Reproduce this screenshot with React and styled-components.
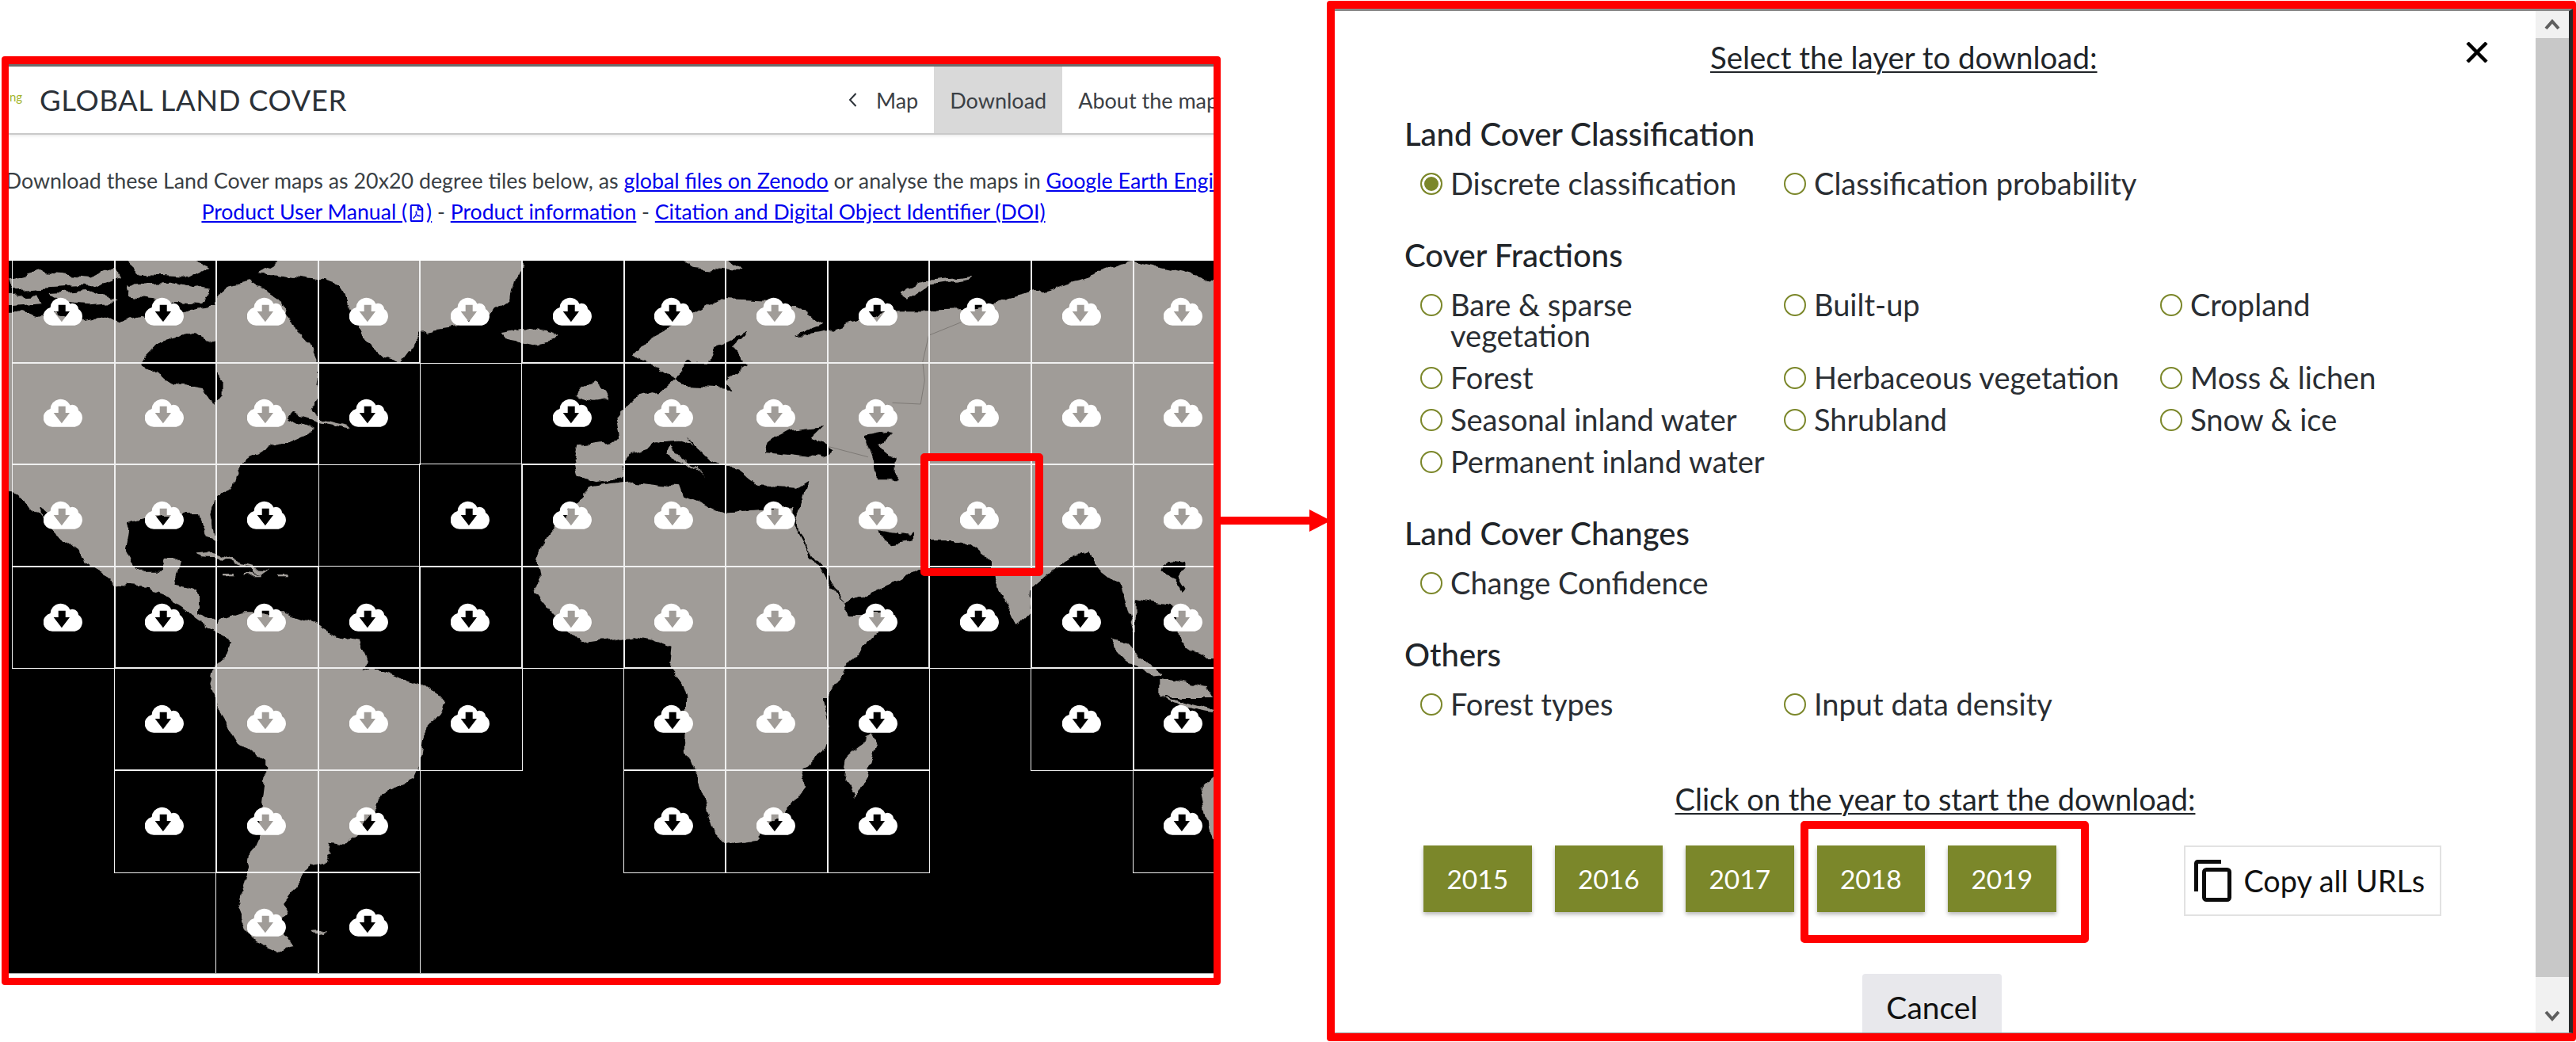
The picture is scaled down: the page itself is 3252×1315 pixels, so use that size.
import React from 'react';
import styled, { createGlobalStyle } from 'styled-components';
import { FaRegFilePdf } from 'react-icons/fa';

const GlobalStyle = createGlobalStyle`
  html, body {
    margin: 0;
    padding: 0;
    background: #fff;
  }
  * {
    box-sizing: border-box;
  }
`;

const Page = styled.div`
  position: relative;
  display: flex;
  align-items: flex-start;
  width: 3252px;
  height: 1315px;
  overflow: hidden;
  background: #fff;
  font-family: Lato, 'Open Sans', sans-serif;
  color: #212529;
`;

const ViewerFrame = styled.section`
  flex: 0 0 1539px;
  height: 1172px;
  margin: 71px 0 0 2px;
  border: 10px solid #ff0000;
  border-width: 10px 9px 9px 9px;
  border-radius: 4px;
  overflow: hidden;
  background: #fff;
`;

const ViewerInner = styled.div`
  width: 1521px;
  height: 1153px;
  border-top: 3px solid #6d6d6d;
  overflow: hidden;
`;

const Header = styled.header`
  display: flex;
  align-items: stretch;
  height: 86px;
  border-bottom: 2px solid #c9c9c9;
  box-shadow: 0 2px 3px rgba(0, 0, 0, 0.08);
`;

const Brand = styled.div`
  flex: 0 0 1050px;
  display: flex;
  align-items: center;
  gap: 22px;
`;

const LogoTail = styled.span`
  width: 16px;
  margin: -8px 0 0 1px;
  font-size: 15px;
  color: #a4b52c;
`;

const BrandTitle = styled.h1`
  margin: 0;
  font-size: 36.5px;
  font-weight: 400;
  letter-spacing: 0.6px;
  white-space: nowrap;
  color: #2b3138;
`;

const Nav = styled.nav`
  flex: 0 0 auto;
  display: flex;
  align-items: stretch;
  margin-left: 8px;
  font-size: 27px;
  color: #3b4045;
`;

const NavItem = styled.div`
  display: flex;
  align-items: center;
  gap: 24px;
  padding: 0 20px 0 ${(p) => (p.$back ? '2px' : '20px')};
  white-space: nowrap;
  background: ${(p) => (p.$active ? '#d9d9d9' : 'transparent')};
`;

const Intro = styled.div`
  width: 1700px;
  margin: 39px 0 0 -74px;
  text-align: center;
  font-size: 26.8px;
  line-height: 39px;
  white-space: nowrap;
  color: #3a3f44;
`;

const IntroLinks = styled.div`
  font-size: 26.6px;
`;

const IntroLink = styled.a`
  color: #0000ee;
  text-decoration: underline;
`;

const PdfMark = styled.span`
  display: inline-flex;
  vertical-align: -3px;
  margin: 0 1px;
  font-size: 22px;
  color: #0000ee;
`;

const MapCanvas = styled.div`
  position: relative;
  height: 900px;
  margin-top: 42px;
  overflow: hidden;
  background: #000;
  border-bottom: 1px solid #aaa;
`;

const LandLayer = styled.svg`
  position: absolute;
  inset: 0;
  width: 1521px;
  height: 899px;
`;

const TileGrid = styled.div`
  position: relative;
  display: grid;
  grid-template-columns: repeat(12, 128.6px);
  grid-template-rows: repeat(7, 128.6px);
  width: 1600px;
  padding-left: 5px;
`;

const Tile = styled.div`
  grid-row: ${(p) => p.$row + 1};
  grid-column: ${(p) => p.$col + 1};
  display: flex;
  align-items: center;
  justify-content: center;
  padding-bottom: 2px;
  outline: 1px solid #f0f0f0;
`;

const CloudIcon = styled.svg`
  width: 51px;
  height: 37px;
  fill: #fff;
`;

const ArrowSlot = styled.div`
  flex: 0 0 134px;
  height: 30px;
  margin-top: 642px;
`;

const ArrowDrawing = styled.svg`
  display: block;
  overflow: visible;
  fill: #ff0000;
`;

const DialogFrame = styled.section`
  flex: 0 0 1577px;
  height: 1313px;
  margin-top: 1px;
  border: solid #ff0000;
  border-width: 10px 4px 10px 10px;
  border-radius: 4px;
  overflow: hidden;
  background: #fff;
`;

const DialogInner = styled.div`
  display: flex;
  height: 1293px;
  border-top: 3px solid #8a8a8a;
  border-bottom: 1px solid #999;
  border-right: 5px solid #26282a;
`;

const DialogBody = styled.div`
  flex: 1;
  min-width: 0;
  overflow: hidden;
`;

const TitleRow = styled.div`
  display: flex;
  align-items: flex-start;
  justify-content: space-between;
  padding: 38px 60px 0 474px;
`;

const Caption = styled.div`
  font-size: 38.4px;
  line-height: 40px;
  text-decoration: underline;
  text-underline-offset: 3px;
  text-decoration-thickness: 2px;
  white-space: nowrap;
`;

const CloseIcon = styled.svg`
  width: 28px;
  height: 26px;
  margin-top: 1px;
  stroke: #000;
  stroke-width: 4.5;
  fill: none;
`;

const Section = styled.div`
  padding-left: 88px;
  margin-top: ${(p) => p.$top || '51px'};
`;

const SectionTitle = styled.h2`
  margin: 0 0 23px;
  font-size: 40px;
  font-weight: 500;
  line-height: 40px;
  white-space: nowrap;
`;

const RadioGrid = styled.div`
  display: grid;
  grid-template-columns: 459px 475px 1fr;
  row-gap: 14px;
  padding-left: 20px;
`;

const RadioRow = styled.label`
  display: flex;
  align-items: flex-start;
  gap: 10px;
  font-size: 38px;
  line-height: 39px;
  color: #2a2e33;
`;

const RadioDot = styled.span`
  flex: 0 0 28px;
  width: 28px;
  height: 28px;
  margin-top: 6px;
  border: 2px solid #7b872a;
  border-radius: 50%;
  background: ${(p) => (p.$checked ? '#7b872a' : '#fff')};
  box-shadow: ${(p) => (p.$checked ? 'inset 0 0 0 3px #fff' : 'none')};
`;

const RadioText = styled.span`
  max-width: ${(p) => (p.$narrow ? '300px' : 'none')};
  white-space: ${(p) => (p.$narrow ? 'normal' : 'nowrap')};
`;

const YearCaption = styled(Caption)`
  margin-top: 80px;
  font-size: 38px;
  text-align: center;
`;

const YearRow = styled.div`
  display: flex;
  align-items: flex-start;
  gap: 29px;
  margin-top: 39px;
  padding-left: 112px;
`;

const YearButton = styled.button`
  flex: 0 0 136.5px;
  height: 84px;
  padding: 0;
  border: none;
  background: #7b872a;
  color: #fff;
  font: 400 33.5px Lato, sans-serif;
  box-shadow: 0 3px 5px rgba(0, 0, 0, 0.28);
`;

const CopyButton = styled.button`
  display: flex;
  align-items: center;
  gap: 16px;
  width: 325px;
  height: 89px;
  margin-left: 132px;
  padding: 0 0 0 11px;
  border: 2px solid #e2e2e2;
  background: #fff;
  color: #111;
  font: 400 37.8px Lato, sans-serif;
  white-space: nowrap;
`;

const CopyIcon = styled.svg`
  flex: 0 0 47px;
  width: 47px;
  height: 53px;
  fill: none;
  stroke: #0b0b0b;
  stroke-width: 5;
`;

const CancelButton = styled.button`
  display: block;
  width: 176px;
  height: 84px;
  margin: 73px 0 0 666px;
  padding: 0;
  border: none;
  border-radius: 4px;
  background: #e8e8ec;
  color: #111;
  font: 400 39px Lato, sans-serif;
`;

const ScrollTrack = styled.div`
  flex: 0 0 42px;
  display: flex;
  flex-direction: column;
`;

const ScrollButton = styled.div`
  display: flex;
  align-items: ${(p) => (p.$end ? 'flex-start' : 'center')};
  justify-content: center;
  height: ${(p) => p.$height}px;
  padding-top: ${(p) => (p.$end ? '42px' : '0')};
  background: #f1f1f1;
`;

const ScrollThumb = styled.div`
  flex: 1;
  background: #c8c8c8;
`;

const Chevron = styled.svg`
  width: 20px;
  height: 14px;
  fill: none;
  stroke: #5f5f5f;
  stroke-width: 4;
`;

const Highlight = styled.div`
  position: absolute;
  left: ${(p) => p.$x}px;
  top: ${(p) => p.$y}px;
  width: ${(p) => p.$w}px;
  height: ${(p) => p.$h}px;
  border: 10px solid #ff0000;
  border-radius: 5px;
  pointer-events: none;
`;

// coastlines were traced from crops of the picture, each crop has its own origin
const seg = (ox, oy, pts) => pts.map(([x, y]) => `${(ox + x / 1.96).toFixed(1)},${(oy + y / 3).toFixed(1)}`);
const Z1 = (pts) => seg(0, 60, pts);
const Z2 = (pts) => seg(800, 60, pts);
const Z3 = (pts) => seg(0, 480, pts);
const Z4 = (pts) => seg(800, 480, pts);
const Z5 = (pts) => seg(0, 880, pts);
const Z6 = (pts) => seg(800, 880, pts);

const LAND = [
  // north and central america
  [
    ...Z1([[-40, 1005], [50, 1000], [90, 1020], [140, 1000], [200, 1030], [250, 1020], [290, 1040], [350, 1020], [420, 1040], [470, 1000], [530, 980], [560, 900], [620, 880], [690, 950], [720, 1050], [770, 1130], [790, 1200]]),
    ...Z3([[785, 20], [790, 60], [770, 110], [800, 150], [860, 170], [870, 185], [800, 165], [720, 130], [710, 150], [780, 190], [720, 230], [650, 260], [610, 300], [585, 340], [575, 400], [530, 460], [518, 510], [530, 600], [510, 590], [490, 510], [400, 510], [320, 540], [310, 640], [340, 725], [400, 725], [410, 680], [445, 680], [430, 770], [490, 790], [490, 880], [530, 910], [540, 945], [515, 930], [460, 870], [370, 780], [290, 770], [220, 710], [210, 670], [150, 590], [100, 530], [60, 450], [22, 420], [-40, 400]]),
  ],
  // arctic islands
  Z1([[22, 880], [100, 850], [220, 870], [280, 830], [300, 870], [240, 900], [120, 910], [30, 920]]),
  Z1([[120, 930], [230, 920], [290, 960], [220, 970], [150, 960]]),
  Z1([[300, 790], [460, 790], [520, 830], [470, 870], [350, 860]]),
  Z1([[310, 900], [420, 890], [520, 920], [500, 970], [400, 960], [320, 940]]),
  Z1([[-40, 950], [90, 940], [100, 970], [-40, 985]]),
  // greenland, iceland, svalbard
  Z1([[720, 780], [640, 850], [790, 880], [840, 900], [870, 1000], [900, 1100], [950, 1170], [990, 1190], [1010, 1150], [1040, 1080], [1130, 1060], [1200, 1020], [1260, 960], [1270, 880], [1290, 830], [1300, 780]]),
  Z1([[1240, 1080], [1300, 1065], [1370, 1080], [1380, 1100], [1320, 1120], [1250, 1100]]),
  Z2([[110, 780], [220, 780], [270, 850], [200, 840], [140, 830]]),
  // caribbean
  Z3([[480, 655], [530, 650], [590, 690], [640, 710], [600, 705], [540, 670], [490, 665]]),
  Z3([[620, 710], [670, 715], [650, 735], [625, 730]]),
  Z3([[555, 735], [580, 735], [580, 745], [555, 745]]),
  Z3([[605, 735], [650, 735], [650, 742], [605, 742]]),
  Z3([[690, 735], [715, 735], [715, 742], [690, 742]]),
  // south america
  [
    ...Z3([[540, 910], [600, 880], [700, 880], [780, 925], [830, 970], [890, 990], [910, 1060], [900, 1090], [930, 1100], [1040, 1150], [1090, 1199]]),
    ...Z5([[1100, 20], [1090, 60], [1050, 130], [1040, 240], [1020, 310], [940, 370], [930, 420], [870, 530], [850, 560], [810, 550], [805, 520], [825, 590], [810, 630], [760, 640], [750, 680], [735, 710], [700, 780], [710, 800], [690, 860], [730, 945], [690, 965], [620, 920], [590, 800], [610, 680], [615, 600], [640, 520], [655, 330], [655, 240], [590, 170], [530, 20]]),
    ...Z3([[530, 1200], [520, 1150], [530, 1080], [560, 1040], [570, 1000], [530, 945]]),
  ],
  Z5([[775, 885], [810, 878], [800, 892], [780, 895]]),
  // british isles
  Z3([[1420, 60], [1440, 20], [1470, 0], [1500, 40], [1510, 70], [1470, 80]]),
  // eurasia
  [
    ...Z3([[1430, 250], [1500, 235], [1535, 225], [1525, 130], [1568, 70]]),
    ...Z4([[70, 40], [100, 0]]),
    ...Z2([[40, 1200], [0, 1160], [30, 1110], [140, 1020], [220, 950], [340, 960], [420, 1000], [470, 1050], [400, 1090], [440, 1085], [480, 1075], [560, 1030], [640, 1000], [720, 1000], [850, 990], [900, 960], [980, 930], [1100, 880], [1230, 810], [1350, 850], [1435, 880], [1500, 880]]),
    ...Z4([[1500, 1050], [1420, 1050], [1380, 1020], [1350, 1000], [1345, 900], [1330, 850], [1240, 825], [1240, 960], [1205, 775], [1160, 720], [1120, 650], [1070, 680], [985, 790], [980, 880], [950, 930], [890, 750], [885, 690], [810, 600], [730, 600], [710, 710], [640, 770], [520, 850], [480, 730], [430, 640], [400, 550], [415, 480], [430, 380], [400, 410], [310, 400], [260, 340], [230, 320], [190, 300], [130, 210], [150, 250], [110, 230], [70, 235], [0, 270]]),
    ...Z3([[1545, 320], [1535, 370], [1480, 385], [1430, 365], [1420, 310]]),
  ],
  Z4([[90, 250], [160, 340], [180, 370], [130, 310], [80, 280]]),
  Z2([[660, 930], [720, 880], [840, 860], [830, 875], [730, 900], [680, 950]]),
  // africa
  [
    ...Z3([[1465, 400], [1420, 470], [1350, 600], [1330, 680], [1340, 770], [1325, 800], [1380, 910], [1440, 1000], [1510, 985], [1568, 970]]),
    ...Z4([[50, 985], [95, 1010], [90, 1090], [120, 1150], [130, 1200]]),
    ...Z6([[125, 200], [160, 330], [200, 520], [225, 555], [300, 540], [380, 420], [420, 340], [410, 280], [470, 210], [485, 130], [470, 0]]),
    ...Z4([[480, 1200], [530, 1070], [600, 960], [650, 885], [530, 885], [520, 850], [480, 760], [430, 650], [395, 550], [395, 480], [220, 500], [120, 440], [110, 400], [0, 380]]),
    ...Z3([[1540, 385]]),
  ],
  Z6([[590, 140], [605, 190], [575, 300], [550, 380], [520, 320], [530, 210]]),
  // south east asia and australia
  Z4([[1175, 980], [1210, 990], [1310, 1110], [1280, 1115], [1210, 1040]]),
  Z4([[1300, 1130], [1420, 1160], [1435, 1200], [1300, 1200]]),
  Z6([[1300, 0], [1340, 10], [1435, 50], [1435, 60], [1380, 45]]),
  Z6([[1435, 300], [1400, 350], [1420, 500], [1440, 555], [1500, 555], [1500, 300]]),
];

const WATER = [
  // hudson bay
  [
    ...Z1([[350, 1190], [400, 1110], [480, 1080], [535, 1120], [535, 1230], [550, 1260]]),
    ...Z3([[550, 60], [530, 95], [515, 60], [505, 30], [430, 10]]),
    ...Z1([[400, 1240], [350, 1200]]),
  ],
  Z3([[95, 480], [110, 500], [130, 590], [160, 640], [150, 640], [120, 590], [95, 510]]),
  // baltic
  [
    ...Z2([[100, 1260], [130, 1190], [190, 1190], [205, 1130], [280, 1075], [245, 1130], [280, 1200], [230, 1260]]),
    ...Z4([[240, 30], [120, 20]]),
  ],
  // black sea, caspian, persian gulf, gulf near india
  Z4([[330, 230], [380, 190], [470, 175], [440, 220], [495, 265], [470, 295], [390, 280], [320, 270]]),
  Z4([[570, 210], [640, 190], [600, 250], [650, 290], [650, 370], [600, 370], [590, 310]]),
  Z4([[600, 570], [620, 610], [640, 625], [690, 610], [690, 570], [680, 590], [640, 580]]),
  Z4([[1320, 680], [1310, 720], [1340, 760], [1355, 800], [1365, 790], [1345, 740], [1365, 710], [1365, 690]]),
];

const BORDERS = [
  Z2([[810, 1040], [730, 1090], [715, 1190], [720, 1260]]),
  Z4([[720, 0], [710, 90], [640, 85]]),
  Z4([[480, 250], [580, 290]]),
];

const TILES = [
  [0, 1, 2, 3, 4, 5, 6, 7, 8, 9, 10, 11],
  [0, 1, 2, 3, 5, 6, 7, 8, 9, 10, 11],
  [0, 1, 2, 4, 5, 6, 7, 8, 9, 10, 11],
  [0, 1, 2, 3, 4, 5, 6, 7, 8, 9, 10, 11],
  [1, 2, 3, 4, 6, 7, 8, 10, 11],
  [1, 2, 3, 6, 7, 8, 11],
  [2, 3],
];

const COVER_FRACTIONS = [
  { label: 'Bare & sparse vegetation', narrow: true },
  { label: 'Built-up' },
  { label: 'Cropland' },
  { label: 'Forest' },
  { label: 'Herbaceous vegetation' },
  { label: 'Moss & lichen' },
  { label: 'Seasonal inland water' },
  { label: 'Shrubland' },
  { label: 'Snow & ice' },
  { label: 'Permanent inland water' },
];

const YEARS = ['2015', '2016', '2017', '2018', '2019'];

function Radio({ label, checked, narrow }) {
  return (
    <RadioRow>
      <RadioDot $checked={checked} />
      <RadioText $narrow={narrow}>{label}</RadioText>
    </RadioRow>
  );
}

function TileCloud() {
  return (
    <CloudIcon viewBox="0 0 51 37">
      <path
        fillRule="evenodd"
        d="M11.5 36.7A11.5 11.5 0 0 1 8.6 14 13 13 0 0 1 33.5 9.5 7.5 7.5 0 0 1 44 16 11.5 11.5 0 0 1 39.5 36.7ZM18.7 10.7H27.7V19H33L22.9 32.3 12.7 19H18.7Z"
      />
    </CloudIcon>
  );
}

export default function App() {
  return (
    <>
      <GlobalStyle />
      <Page>
        <ViewerFrame>
          <ViewerInner>
            <Header>
              <Brand>
                <LogoTail>ng</LogoTail>
                <BrandTitle>GLOBAL LAND COVER</BrandTitle>
              </Brand>
              <Nav>
                <NavItem $back>
                  <svg width="11" height="18" viewBox="0 0 11 18" fill="none" stroke="#2b3138" strokeWidth="2">
                    <path d="M9.5 1 2 9l7.5 8" />
                  </svg>
                  Map
                </NavItem>
                <NavItem $active>Download</NavItem>
                <NavItem>About the map</NavItem>
              </Nav>
            </Header>
            <Intro>
              <div>
                Download these Land Cover maps as 20x20 degree tiles below, as{' '}
                <IntroLink>global files on Zenodo</IntroLink> or analyse the maps in{' '}
                <IntroLink>Google Earth Engine</IntroLink>.
              </div>
              <IntroLinks>
                <IntroLink>
                  Product User Manual (
                  <PdfMark>
                    <FaRegFilePdf />
                  </PdfMark>
                  )
                </IntroLink>{' '}
                - <IntroLink>Product information</IntroLink> -{' '}
                <IntroLink>Citation and Digital Object Identifier (DOI)</IntroLink>
              </IntroLinks>
            </Intro>
            <MapCanvas>
              <LandLayer viewBox="11 329 1521 899">
                <filter id="coast" filterUnits="userSpaceOnUse" x="-40" y="290" width="1640" height="980">
                  <feTurbulence type="fractalNoise" baseFrequency="0.045" numOctaves="3" seed="4" />
                  <feDisplacementMap in="SourceGraphic" scale="13" xChannelSelector="R" yChannelSelector="G" />
                </filter>
                <g filter="url(#coast)">
                  {LAND.map((pts, i) => (
                    <polygon key={i} points={pts.join(' ')} fill="#a09c98" />
                  ))}
                  {WATER.map((pts, i) => (
                    <polygon key={i} points={pts.join(' ')} fill="#000" />
                  ))}
                </g>
                {BORDERS.map((pts, i) => (
                  <polyline key={i} points={pts.join(' ')} fill="none" stroke="#7d7975" strokeWidth="1" />
                ))}
              </LandLayer>
              <TileGrid>
                {TILES.flatMap((cols, row) =>
                  cols.map((col) => (
                    <Tile key={`${row}-${col}`} $row={row} $col={col}>
                      <TileCloud />
                    </Tile>
                  ))
                )}
              </TileGrid>
            </MapCanvas>
          </ViewerInner>
        </ViewerFrame>

        <ArrowSlot>
          <ArrowDrawing width="134" height="30" viewBox="0 0 134 30">
            <path d="M0 10H112V1L139 15 112 29V20H0Z" />
          </ArrowDrawing>
        </ArrowSlot>

        <DialogFrame>
          <DialogInner>
            <DialogBody>
              <TitleRow>
                <Caption>Select the layer to download:</Caption>
                <CloseIcon viewBox="0 0 28 26">
                  <path d="M2 1 26 25M26 1 2 25" />
                </CloseIcon>
              </TitleRow>

              <Section $top="57px">
                <SectionTitle>Land Cover Classification</SectionTitle>
                <RadioGrid>
                  <Radio label="Discrete classification" checked />
                  <Radio label="Classification probability" />
                </RadioGrid>
              </Section>

              <Section>
                <SectionTitle>Cover Fractions</SectionTitle>
                <RadioGrid>
                  {COVER_FRACTIONS.map((item) => (
                    <Radio key={item.label} label={item.label} narrow={item.narrow} />
                  ))}
                </RadioGrid>
              </Section>

              <Section>
                <SectionTitle>Land Cover Changes</SectionTitle>
                <RadioGrid>
                  <Radio label="Change Confidence" />
                </RadioGrid>
              </Section>

              <Section>
                <SectionTitle>Others</SectionTitle>
                <RadioGrid>
                  <Radio label="Forest types" />
                  <Radio label="Input data density" />
                </RadioGrid>
              </Section>

              <YearCaption>Click on the year to start the download:</YearCaption>
              <YearRow>
                {YEARS.map((year) => (
                  <YearButton key={year}>{year}</YearButton>
                ))}
                <CopyButton>
                  <CopyIcon viewBox="0 0 47 53">
                    <path d="M2.5 40V4.5a2 2 0 0 1 2-2H34" />
                    <rect x="12.5" y="12.5" width="32" height="38" rx="3" />
                  </CopyIcon>
                  Copy all URLs
                </CopyButton>
              </YearRow>
              <CancelButton>Cancel</CancelButton>
            </DialogBody>
            <ScrollTrack>
              <ScrollButton $height={34}>
                <Chevron viewBox="0 0 20 14">
                  <path d="M2 12 10 3l8 9" />
                </Chevron>
              </ScrollButton>
              <ScrollThumb />
              <ScrollButton $height={70} $end>
                <Chevron viewBox="0 0 20 14">
                  <path d="M2 2l8 9 8-9" />
                </Chevron>
              </ScrollButton>
            </ScrollTrack>
          </DialogInner>
        </DialogFrame>

        <Highlight $x={1162} $y={572} $w={155} $h={155} />
        <Highlight $x={2273} $y={1036} $w={364} $h={154} />
      </Page>
    </>
  );
}
